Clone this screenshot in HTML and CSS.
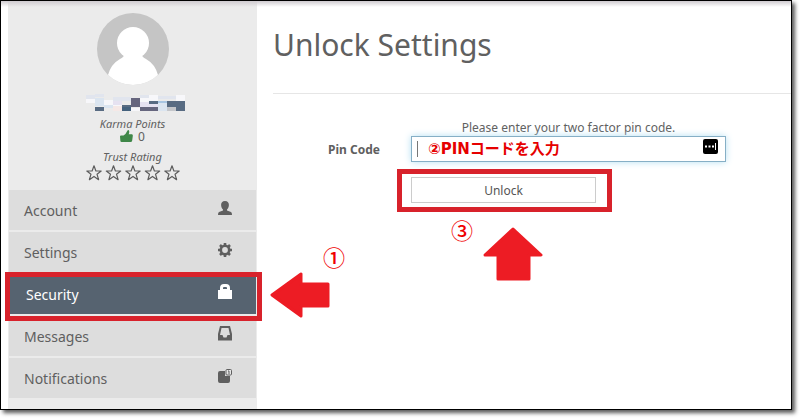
FILE: index.html
```html
<!DOCTYPE html>
<html lang="ja">
<head>
  <meta charset="UTF-8" />
  <meta name="viewport" content="width=device-width, initial-scale=1.0"/>
  <title>Unlock Settings</title>
  <link rel="stylesheet" href="styles.css">
</head>
<body>

  <div class="frame">
    <aside class="sidebar">
      <div class="profile">
        <svg class="avatar" viewBox="0 0 72 72" aria-hidden="true">
          <clipPath id="round"><circle cx="36" cy="36" r="36"/></clipPath>
          <g clip-path="url(#round)">
            <rect width="72" height="72" fill="#c5c5c5"/>
            <circle cx="36" cy="30" r="16" fill="#fff"/>
            <path d="M27 42Q27 44 23 46Q14 51 11 62L11 72H61V62Q58 51 49 46Q45 44 45 42Z" fill="#fff"/>
          </g>
        </svg>
        <svg class="username" viewBox="0 0 99 18" shape-rendering="crispEdges" aria-hidden="true">
          <path fill="#e1e5ee" d="M0 2h9v4H0zM9 1h9v3H9zM27 4h18v4H27zM54 2h9v3h-9zM72 3h18v3H72z"/>
          <path fill="#f7f7fa" d="M0 6h9v4H0zM18 7h9v5h-9zM27 12h9v6h-9zM45 15h9v3h-9zM54 5h18v4H54zM90 2h9v6h-9zM63 2h9v3h-9z"/>
          <path fill="#dbe5f0" d="M9 5h9v8H9zM72 10h9v8h-9zM18 12h9v3h-9z"/>
          <path fill="#e6e2f1" d="M27 8h9v4h-9zM54 9h9v5h-9zM63 10h9v4h-9z"/>
          <path fill="#f5e8e6" d="M27 13h9v5h-9z"/>
          <path fill="#a9c6e2" d="M72 8h9v2h-9z"/>
          <path fill="#586b82" d="M9 14h9v4H9zM36 12h9v2h-9zM63 8h9v3h-9zM81 8h18v6H81zM90 14h9v4h-9z"/>
          <path fill="#44617d" d="M36 14h9v4h-9z"/>
          <path fill="#66667e" d="M45 5h9v9h-9zM54 14h18v4H54z"/>
          <path fill="#c4c6ca" d="M81 14h9v4h-9z"/>
        </svg>
        <div class="caption">Karma Points</div>
        <div class="karma">
          <svg class="thumb" viewBox="0 0 13 12" aria-hidden="true">
            <path d="M0 6.5Q0 5.5 1 5.5H3.5Q6 4 7.5 0.5Q8 -.3 8.8 .3Q9.8 1.5 8.7 4.3H12Q13 4.5 12.8 6L12.2 10.5Q12 12 10.5 12H1.5Q.5 12 .4 11Z" fill="#3f8748"/>
          </svg>
          <span>0</span>
        </div>
        <div class="caption">Trust Rating</div>
        <svg class="stars" viewBox="0 0 94 16" role="img" aria-label="0 / 5">
          <defs>
            <path id="star" d="M8 .8L9.900 6H15.200L11 9.200L12.600 14.700L8 11.400L3.400 14.700L5 9.200L.8 6H6.100Z" fill="none" stroke="#5c5c5c" stroke-width="1.200" stroke-linejoin="round"/>
          </defs>
          <use href="#star"/>
          <use href="#star" x="19.5"/>
          <use href="#star" x="39"/>
          <use href="#star" x="58.5"/>
          <use href="#star" x="78"/>
        </svg>
      </div>

      <nav>
        <ul class="menu">
          <li><a href="#">Account
            <svg class="icon" viewBox="0 0 16 16" aria-hidden="true">
              <path d="M8 1C5.300 1 4 2.700 4.100 5C4.200 7 5 8.700 6 9.500V10.500L2 12Q1 12.500 1 15H15Q15 12.500 14 12L10 10.500V9.500C11 8.700 11.800 7 11.900 5C12 2.700 10.700 1 8 1Z" fill="currentColor"/>
            </svg></a></li>
          <li><a href="#">Settings
            <svg class="icon" viewBox="0 0 16 16" aria-hidden="true">
              <circle cx="8" cy="8" r="4.200" fill="none" stroke="currentColor" stroke-width="2.600"/>
              <path d="M8 1V3.500M8 12.500V15M1 8H3.500M12.500 8H15M3 3L4.800 4.800M11.200 11.200L13 13M3 13L4.800 11.200M11.200 4.800L13 3" stroke="currentColor" stroke-width="2.600"/>
            </svg></a></li>
          <li class="active"><a href="#">Security
            <svg class="icon" viewBox="0 0 16 16" aria-hidden="true">
              <path d="M1 6H3V4Q3 0 7 0H9Q13 0 13 4V6H15V14.500Q15 15 14.500 15H1.500Q1 15 1 14.500ZM6 5H10V4Q10 3 9 3H7Q6 3 6 4Z" fill="currentColor" fill-rule="evenodd"/>
            </svg></a>
            <span class="outline"></span>
            <svg class="arrow-left" viewBox="0 0 60 46" aria-hidden="true">
              <path d="M2 23L31 2V12H58V34H31V44Z" fill="#ed1c24" stroke="#ed1c24" stroke-width="3" stroke-linejoin="round"/>
            </svg>
            <span class="mark mark-one">①</span>
          </li>
          <li><a href="#">Messages
            <svg class="icon" viewBox="0 0 16 16" aria-hidden="true">
              <path d="M3 0H13L15 8V14.500H1V8ZM4.500 2L3 9H5.500L6.500 11.500H9.500L10.500 9H13L11.500 2Z" fill="currentColor" fill-rule="evenodd"/>
            </svg></a></li>
          <li><a href="#">Notifications
            <svg class="icon" viewBox="0 0 16 16" aria-hidden="true">
              <path d="M3 3H8V8H13V13Q13 15 11 15H3Q1 15 1 13V5Q1 3 3 3Z" fill="currentColor"/>
              <rect x="9" y="1.500" width="5.500" height="5.500" rx="1" fill="#e6e6e6" stroke="currentColor"/>
              <path d="M11 3H12V6" stroke="currentColor" fill="none"/>
            </svg></a></li>
        </ul>
      </nav>
    </aside>

    <main class="content">
      <h1>Unlock Settings</h1>
      <form class="pin-form">
        <p class="hint">Please enter your two factor pin code.</p>
        <label for="pin">Pin Code</label>
        <div class="field">
          <input type="text" id="pin" />
          <span class="caret"></span>
          <span class="note">②PINコードを入力</span>
          <svg class="manager" viewBox="0 0 15 15" aria-hidden="true">
            <rect width="15" height="15" rx="2" fill="#000"/>
            <path d="M2 6.500h2v2H2zM5.500 6.500h2v2h-2zM9 6.500h2v2H9zM12 4h1v7h-1z" fill="#fff"/>
          </svg>
        </div>
        <div class="submit">
          <button type="button">Unlock</button>
          <span class="outline"></span>
          <span class="mark mark-three">③</span>
          <svg class="arrow-up" viewBox="0 0 60 54" aria-hidden="true">
            <path d="M30 2L58 28H46V52H15V28H2Z" fill="#ed1c24" stroke="#ed1c24" stroke-width="3" stroke-linejoin="round"/>
          </svg>
        </div>
      </form>
    </main>
  </div>

</body>
</html>
```
FILE: styles.css
```css
* {
  box-sizing: border-box;
}
body {
  margin: 0;
  padding: 0 8px 8px 0;
  min-height: 100vh;
  display: flex;
  font-family: "Noto Sans", "Open Sans", sans-serif;
  color: #606060;
  background: #fff;
}
.frame {
  flex: 1;
  display: flex;
  padding-left: 7px;
  border: 1px solid #000;
  background: linear-gradient(#cfcbd0, #fff 6px);
  box-shadow: 3px 3px 4px rgba(0, 0, 0, 0.65);
}

/* sidebar */
.sidebar {
  width: 249px;
  flex-shrink: 0;
  background: linear-gradient(#cfcbd0, #ebebeb 6px);
}
.profile {
  display: flex;
  flex-direction: column;
  align-items: center;
  padding: 12px 0 9px;
}
.avatar {
  width: 72px;
  height: 72px;
}
.username {
  width: 99px;
  height: 18px;
  margin: 8px 0 6px 6px;
}
.caption {
  font-size: 11px;
  line-height: 14px;
  font-style: italic;
}
.karma {
  display: flex;
  gap: 5px;
  height: 19px;
  font-size: 12px;
  line-height: 12px;
}
.thumb {
  width: 13px;
  height: 12px;
  margin-top: -1px;
}
.stars {
  width: 94px;
  height: 16px;
  margin-top: 1px;
}
.menu {
  list-style: none;
  margin: 0;
  padding: 0 1px;
  display: grid;
  gap: 2px;
}
.menu li {
  position: relative;
}
.menu a {
  display: flex;
  justify-content: space-between;
  height: 40px;
  padding: 0 23px 0 15px;
  font-size: 14px;
  line-height: 41px;
  color: #5f5f5f;
  background: #ddd;
  text-decoration: none;
}
.menu .active {
  z-index: 1;
}
.menu .active a {
  padding-left: 17px;
  color: #fff;
  background: #566370;
}
.icon {
  width: 16px;
  height: 16px;
  margin-top: 10px;
}

/* main column */
.content {
  flex: 1;
  padding: 21px 0 0 16px;
}
h1 {
  margin: 0 0 26px;
  padding-bottom: 26px;
  border-bottom: 1px solid #e6e6e6;
  font-size: 30px;
  line-height: 45px;
  font-weight: 400;
}
.pin-form {
  display: grid;
  grid-template-columns: 107px 315px;
  column-gap: 31px;
  align-items: center;
}
.hint {
  grid-column: 2;
  margin: 0;
  font-size: 12px;
  line-height: 16px;
  text-align: center;
}
label {
  font-size: 12px;
  font-weight: 700;
  text-align: right;
}
.field,
.submit {
  position: relative;
}
.field {
  display: flex;
}
.field input {
  width: 100%;
  height: 26px;
  padding: 0 30px 0 6px;
  border: 1px solid #86afc6;
  box-shadow: 0 0 7px #b5dff2;
  font: inherit;
}
.submit {
  grid-column: 2;
  width: 185px;
  margin-top: 15px;
}
button {
  display: block;
  width: 100%;
  height: 26px;
  border: 1px solid #ccc;
  background: #fff;
  font: 12px "Noto Sans", "Open Sans", sans-serif;
  color: #555;
}

/* red notes over the page */
.caret {
  position: absolute;
  left: 6px;
  top: 5px;
  width: 1px;
  height: 16px;
  background: #777;
}
.note {
  position: absolute;
  left: 17px;
  top: 2px;
  font: bold 15px/22px "DejaVu Sans", "Noto Sans CJK JP", sans-serif;
  color: #e60000;
}
.manager {
  position: absolute;
  right: 8px;
  top: 3px;
  width: 15px;
  height: 15px;
}
.outline {
  position: absolute;
  border: 5px solid #d8222b;
  pointer-events: none;
}
.active .outline {
  inset: -2px -6px -7px -4px;
}
.submit .outline {
  inset: -8px -16px -9px -14px;
}
.mark {
  position: absolute;
  font: 22px/24px "Noto Sans CJK JP", sans-serif;
  font-weight: 500;
  color: #f00000;
}
.mark-one {
  left: 314px;
  top: -30px;
}
.mark-three {
  left: 40px;
  top: 40px;
}
.arrow-left {
  position: absolute;
  left: 261px;
  top: -2px;
  width: 60px;
  height: 46px;
}
.arrow-up {
  position: absolute;
  left: 72px;
  top: 50px;
  width: 60px;
  height: 54px;
}
```
